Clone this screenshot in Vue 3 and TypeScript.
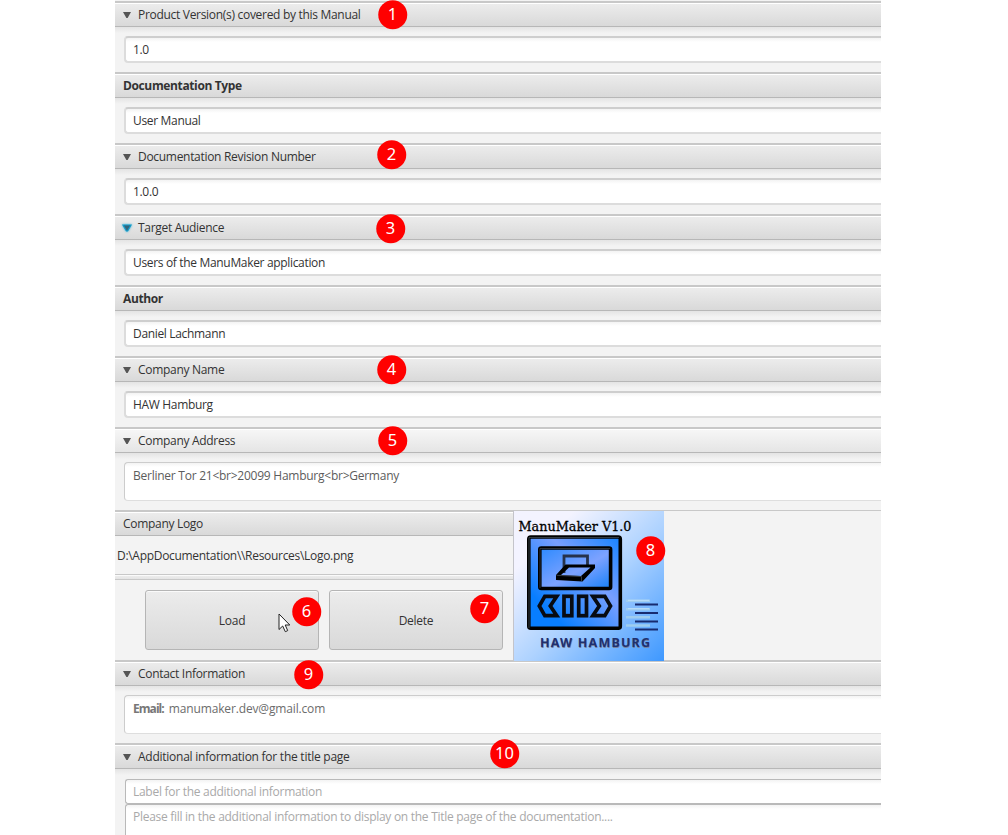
<script setup lang="ts">
interface Section {
  title: string
  value: string
  kind: 'arrow' | 'focus' | 'bold'
  tall?: boolean
  light?: boolean
}

interface Marker {
  n: number
  x: number
  y: number
}

const sections: Section[] = [
  { title: 'Product Version(s) covered by this Manual', value: '1.0', kind: 'arrow' },
  { title: 'Documentation Type', value: 'User Manual', kind: 'bold' },
  { title: 'Documentation Revision Number', value: '1.0.0', kind: 'arrow' },
  { title: 'Target Audience', value: 'Users of the ManuMaker application', kind: 'focus' },
  { title: 'Author', value: 'Daniel Lachmann', kind: 'bold' },
  { title: 'Company Name', value: 'HAW Hamburg', kind: 'arrow' },
  { title: 'Company Address', value: 'Berliner Tor 21<br>20099 Hamburg<br>Germany', kind: 'arrow', tall: true, light: true },
]

const markers: Marker[] = [
  { n: 1, x: 392.5, y: 14.5 },
  { n: 2, x: 391.5, y: 154.5 },
  { n: 3, x: 390.5, y: 228.5 },
  { n: 4, x: 391.5, y: 369.5 },
  { n: 5, x: 392.5, y: 440.5 },
  { n: 6, x: 306.5, y: 611.5 },
  { n: 7, x: 484.5, y: 608.5 },
  { n: 8, x: 650.5, y: 550.5 },
  { n: 9, x: 308.5, y: 674.5 },
  { n: 10, x: 504.5, y: 753.5 },
]
</script>

<template>
  <div class="page">
    <main class="form">
      <section v-for="s in sections" :key="s.title" class="section" :class="{ tall: s.tall }">
        <header class="head" :class="{ light: s.light }">
          <svg v-if="s.kind !== 'bold'" class="arrow" :class="{ focus: s.kind === 'focus' }" viewBox="0 0 8 7">
            <path d="M0 .5H8L4.6 6.5H3.4Z" />
          </svg>
          <span :class="{ strong: s.kind === 'bold' }">{{ s.title }}</span>
        </header>
        <div class="body">
          <div class="field" :class="{ soft: s.tall }"><span>{{ s.value }}</span></div>
        </div>
      </section>

      <section class="logo-row">
        <div class="logo-left">
          <header class="head"><span>Company Logo</span></header>
          <div class="file"><span>D:\AppDocumentation\\Resources\Logo.png</span></div>
          <div class="divider"></div>
          <div class="buttons">
            <button type="button">Load</button>
            <button type="button">Delete</button>
          </div>
        </div>
        <svg class="logo" viewBox="0 0 150 150">
          <defs>
            <linearGradient id="sky" x1="0" y1="0" x2="1" y2="1">
              <stop offset="0.2" stop-color="#f3f3ff" />
              <stop offset="0.55" stop-color="#add2ff" />
              <stop offset="1" stop-color="#3e98ff" />
            </linearGradient>
            <linearGradient id="panel" x1="0" y1="1" x2="1" y2="0">
              <stop offset="0.2" stop-color="#087eff" />
              <stop offset="0.62" stop-color="#789fff" />
              <stop offset="1" stop-color="#1683ff" />
            </linearGradient>
            <linearGradient id="screen" x1="0" y1="0" x2="1" y2="1">
              <stop offset="0" stop-color="#2c8aff" />
              <stop offset="0.55" stop-color="#7da2ff" />
              <stop offset="1" stop-color="#1680f8" />
            </linearGradient>
          </defs>
          <rect width="150" height="150" fill="url(#sky)" />
          <text x="4.5" y="19.600" class="logo-title" textLength="113" lengthAdjust="spacingAndGlyphs">ManuMaker V1.0</text>
          <rect x="14.8" y="26" width="91.500" height="91.200" rx="2" fill="url(#panel)" stroke="#000" stroke-width="3.600" />
          <path d="M15 117V26.500H105" fill="none" stroke="#53616c" stroke-width=".6" />
          <rect x="25.800" y="37" width="70.800" height="40.500" rx="1.500" fill="url(#screen)" stroke="#000" stroke-width="3.600" />
          <path d="M26 77V37.500H96" fill="none" stroke="#4d5660" stroke-width=".6" />
          <path d="M50 62V45H73.500V56" fill="none" stroke="#26324b" stroke-width="2.800" />
          <path fill-rule="evenodd" fill="#000" d="M42 64L51.500 53.500H81V57L68.500 70.500L42 69ZM47 64L67 65L76.500 56.500H55Z" />
          <path d="M42.500 64.300L67.500 65.600V70" fill="none" stroke="#59636e" stroke-width=".6" />
          <g fill="none" stroke="#080b12" stroke-width="3.700">
            <path d="M30.800 85.300H42.800L36.300 95L42.800 104.700H30.800L25.300 95Z" />
            <rect x="50" y="85.300" width="7.800" height="19.400" />
            <rect x="64.700" y="85.300" width="7.800" height="19.400" />
            <path d="M78.800 85.300H90.800L96.500 95L90.800 104.700H78.800L85.300 95Z" />
          </g>
          <path d="M112 89.800h24M112 98.200h24M112 106.300h24M112 114.500h24" stroke="#9fcdef" stroke-width="2.400" />
          <path d="M114 89.300h21M114 97.700h21" stroke="#c9e6ff" stroke-width=".7" />
          <path d="M121 93.500h23M121 102h23M121 110.500h23M121 118.500h23" stroke="#172b70" stroke-width="2" />
          <text x="26.500" y="136.800" class="logo-brand shade" textLength="110" lengthAdjust="spacing">HAW HAMBURG</text>
          <text x="26" y="136.300" class="logo-brand" textLength="110" lengthAdjust="spacing">HAW HAMBURG</text>
        </svg>
      </section>

      <section class="section tall">
        <header class="head">
          <svg class="arrow" viewBox="0 0 8 7"><path d="M0 .5H8L4.6 6.5H3.4Z" /></svg>
          <span>Contact Information</span>
        </header>
        <div class="body">
          <div class="field soft"><b>Email:</b><span class="mail">manumaker.dev@gmail.com</span></div>
        </div>
      </section>

      <section class="section last">
        <header class="head">
          <svg class="arrow" viewBox="0 0 8 7"><path d="M0 .5H8L4.6 6.5H3.4Z" /></svg>
          <span class="extra">Additional information for the title page</span>
        </header>
        <div class="body stack">
          <div class="hint">Label for the additional information</div>
          <div class="hint area">Please fill in the additional information to display on the Title page of the documentation....</div>
        </div>
      </section>
    </main>

    <svg class="cursor" viewBox="0 0 13 20">
      <path d="M1 1V16.500L4.700 13L7.300 18.700L9.700 17.600L7.200 12H11.800Z" fill="#fff" stroke="#222" stroke-width="1" />
    </svg>
    <span v-for="m in markers" :key="m.n" class="marker" :style="{ left: m.x + 'px', top: m.y + 'px' }">{{ m.n }}</span>
  </div>
</template>

<style>
body { margin: 0; background: #fff; }
</style>

<style scoped>
.page {
  position: relative;
  width: 1008px;
  height: 835px;
  overflow: hidden;
  background: #fff;
  color: #333;
  font: 12px/16px "Open Sans", "Noto Sans", sans-serif;
  letter-spacing: -0.3px;
}
.form {
  box-sizing: border-box;
  width: 766px;
  height: 835px;
  margin-left: 115px;
  padding-top: 1px;
  overflow: hidden;
  background: #f3f3f3;
}
.section { height: 71px; }
.section.tall { height: 83px; }
.section.last { height: 92px; }
.head {
  box-sizing: border-box;
  display: flex;
  align-items: center;
  height: 26px;
  padding: 1px 8px 0;
  border-top: 2px solid #c8c8c8;
  border-bottom: 1px solid #b7b7b7;
  background: linear-gradient(#fff 0 1px, #ececec 1px, #d9d9d9 100%);
  white-space: nowrap;
}
.head.light { background: linear-gradient(#fff 0 1px, #f6f6f6 1px, #e5e5e5 100%); }
.arrow { width: 8px; height: 7px; margin-right: 7px; fill: #555; overflow: visible; transform: translateY(-.5px); }
.arrow.focus { fill: #34647a; stroke: #149bc9; stroke-width: 1.2; filter: drop-shadow(0 0 1px #35b2d8); }
.strong { font-weight: 700; letter-spacing: -.37px; }
.extra { letter-spacing: -.25px; }
.body {
  box-sizing: border-box;
  height: calc(100% - 26px);
  padding: 9px 0 9px 9px;
  background: linear-gradient(#e4e4e4, #f3f3f3 6px);
}
.field {
  box-sizing: border-box;
  height: 100%;
  padding: 4px 7px;
  border: 2px solid #dcdcdc;
  border-top-color: #cecece;
  border-right: 0;
  border-radius: 4px 0 0 4px;
  background: linear-gradient(#f3f3f3, #fff 4px);
  letter-spacing: -.33px;
  white-space: nowrap;
}
.field.soft {
  border-width: 1px 0 1px 1px;
  border-color: #ccc #ccc #dedede;
  padding: 5px 8px;
  color: #5c5c5c;
  letter-spacing: -.25px;
}
.field b { color: #777; letter-spacing: -.95px; }
.mail { margin-left: 5px; color: #6c6c6c; letter-spacing: -.15px; }
.logo-row { display: flex; height: 150px; background: #f3f3f3; box-shadow: inset 0 1px #c8c8c8; }
.logo-left { box-sizing: border-box; width: 399px; height: 150px; border-right: 1px solid #c4c4ca; }
.file { box-sizing: border-box; height: 38px; padding: 12px 2px; }
.divider {
  box-sizing: border-box;
  height: 6px;
  border-top: 1px solid #c8c8c8;
  border-bottom: 1px solid #c8c8c8;
  background: linear-gradient(#eee, #e4e4e4);
  box-shadow: inset 0 1px #fafafa;
}
.buttons { display: flex; gap: 10px; padding: 10px 10px 0 30px; }
button {
  box-sizing: border-box;
  width: 174px;
  height: 60px;
  padding: 2px 0 0;
  border: 1px solid #b5b5b5;
  border-radius: 3px;
  background: linear-gradient(#ececec, #d9d9d9);
  box-shadow: inset 0 1px #fafafa;
  color: #333;
  font: inherit;
  letter-spacing: -.25px;
}
.logo { position: relative; width: 150px; height: 150px; margin-top: 1px; }
.logo-title { font: 13px "DejaVu Serif", serif; fill: #000; stroke: #000; stroke-width: .3; letter-spacing: 0; }
.logo-brand { font: 700 12.500px "Noto Sans", sans-serif; fill: #20306f; letter-spacing: 0; }
.logo-brand.shade { fill: #77839e; }
.stack { padding: 10px 0 0 10px; }
.hint {
  box-sizing: border-box;
  height: 25px;
  padding: 4px 7px;
  border: 1px solid #b9b9b9;
  border-right: 0;
  border-radius: 3px 0 0 3px;
  background: linear-gradient(#f3f3f3, #fff 4px);
  color: #a9a9a9;
  letter-spacing: -.28px;
  white-space: nowrap;
}
.hint.area { height: 60px; }
.cursor { position: absolute; left: 278px; top: 613px; width: 13px; height: 20px; }
.marker {
  position: absolute;
  width: 29.500px;
  height: 29.500px;
  border-radius: 50%;
  background: #f00;
  color: #fff;
  font: 16.500px/28px "Noto Sans", sans-serif;
  letter-spacing: 0;
  text-align: center;
  transform: translate(-50%, -50%);
}
</style>
